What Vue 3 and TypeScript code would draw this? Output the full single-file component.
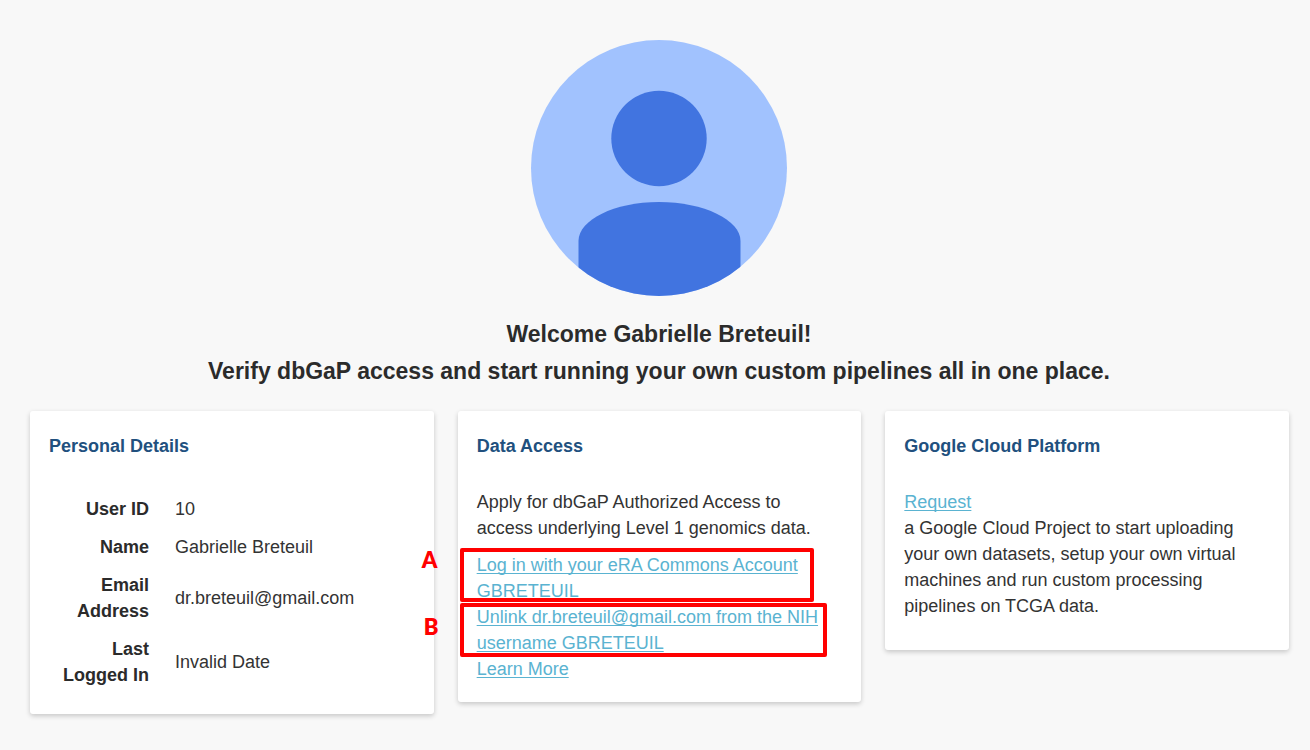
<script setup lang="ts">
interface Detail {
  label: string
  value: string
}

interface AccountLink {
  mark: string
  text: string
}

const userName = 'Gabrielle Breteuil'

const details: Detail[] = [
  { label: 'User ID', value: '10' },
  { label: 'Name', value: userName },
  { label: 'Email Address', value: 'dr.breteuil@gmail.com' },
  { label: 'Last Logged In', value: 'Invalid Date' },
]

const accountLinks: AccountLink[] = [
  { mark: 'A', text: 'Log in with your eRA Commons Account GBRETEUIL' },
  { mark: 'B', text: 'Unlink dr.breteuil@gmail.com from the NIH username GBRETEUIL' },
]
</script>

<template>
  <main class="page">
    <header class="hero">
      <svg class="avatar" viewBox="0 0 256 256" role="img" aria-label="User avatar">
        <defs>
          <clipPath id="avatar-clip"><circle cx="128" cy="128" r="128" /></clipPath>
        </defs>
        <g clip-path="url(#avatar-clip)">
          <rect width="256" height="256" fill="#a1c2fe" />
          <circle cx="128" cy="98.500" r="47.700" fill="#4174e0" />
          <path d="M47.500 256V201C47.500 180 83 162 128 162S209.500 180 209.500 201V256Z" fill="#4174e0" />
        </g>
      </svg>
      <h1>Welcome {{ userName }}!</h1>
      <h2>Verify dbGaP access and start running your own custom pipelines all in one place.</h2>
    </header>

    <div class="cards">
      <section class="card">
        <h3>Personal Details</h3>
        <table>
          <tbody>
            <tr v-for="row in details" :key="row.label">
              <th scope="row">{{ row.label }}</th>
              <td>{{ row.value }}</td>
            </tr>
          </tbody>
        </table>
      </section>

      <section class="card">
        <h3>Data Access</h3>
        <p>Apply for dbGaP Authorized Access to access underlying Level 1 genomics data.</p>
        <div v-for="link in accountLinks" :key="link.mark" class="marked" :class="'mark-' + link.mark.toLowerCase()">
          <a href="#">{{ link.text }}</a>
          <span class="frame"></span>
          <span class="letter">{{ link.mark }}</span>
        </div>
        <div><a href="#">Learn More</a></div>
      </section>

      <section class="card">
        <h3>Google Cloud Platform</h3>
        <p>
          <a href="#">Request</a><br />
          a Google Cloud Project to start uploading your own datasets, setup your own virtual machines and run custom
          processing pipelines on TCGA data.
        </p>
      </section>
    </div>
  </main>
</template>

<style>
body {
  margin: 0;
  background: #f8f8f8;
}
</style>

<style scoped>
.page {
  padding: 40px 21px 36px 30px;
  font-family: "Liberation Sans", Arial, sans-serif;
  font-size: 18px;
  line-height: 26px;
  color: #333;
}

.hero {
  display: flex;
  flex-direction: column;
  align-items: center;
  padding-right: 1px;
  text-align: center;
}

.avatar {
  width: 256px;
  height: 256px;
  margin-bottom: 20px;
}

h1,
h2 {
  margin: 0;
  font-size: 23px;
  line-height: 37px;
  font-weight: 700;
  color: #2b2b2b;
}

.cards {
  display: grid;
  grid-template-columns: repeat(3, 1fr);
  align-items: start;
  gap: 24px;
  margin-top: 21px;
}

.card {
  padding: 22px 25px 20px 19px;
  border-radius: 3px;
  background: #fff;
  box-shadow: 0 2px 5px rgba(0, 0, 0, 0.2);
}

h3 {
  margin: 0 0 30px;
  font-size: 18px;
  line-height: 26px;
  font-weight: 700;
  color: #21507e;
}

p {
  margin: 0 0 11px;
}

table {
  width: 100%;
  margin-top: 31px;
  border-collapse: collapse;
}

th,
td {
  padding: 6px 13px;
  text-align: left;
  vertical-align: middle;
}

th {
  box-sizing: border-box;
  width: 113px;
  text-align: right;
  color: #2b2b2b;
}

a {
  color: #5ab3d1;
  text-decoration: underline;
  text-decoration-thickness: 1px;
  text-decoration-skip-ink: none;
  text-underline-offset: 2px;
}

.marked {
  position: relative;
}

.frame {
  position: absolute;
  top: -4px;
  right: 22px;
  bottom: 2px;
  left: -17px;
  border: 4px solid #f00;
  border-radius: 2px;
  pointer-events: none;
}

.mark-b .frame {
  top: -1px;
  right: 9px;
  bottom: -1px;
}

.letter {
  position: absolute;
  top: -5px;
  left: -55px;
  font-family: Lato, "Open Sans", sans-serif;
  font-size: 22px;
  font-weight: 800;
  color: #f00;
}

.mark-b .letter {
  top: 10px;
  left: -53px;
}
</style>
